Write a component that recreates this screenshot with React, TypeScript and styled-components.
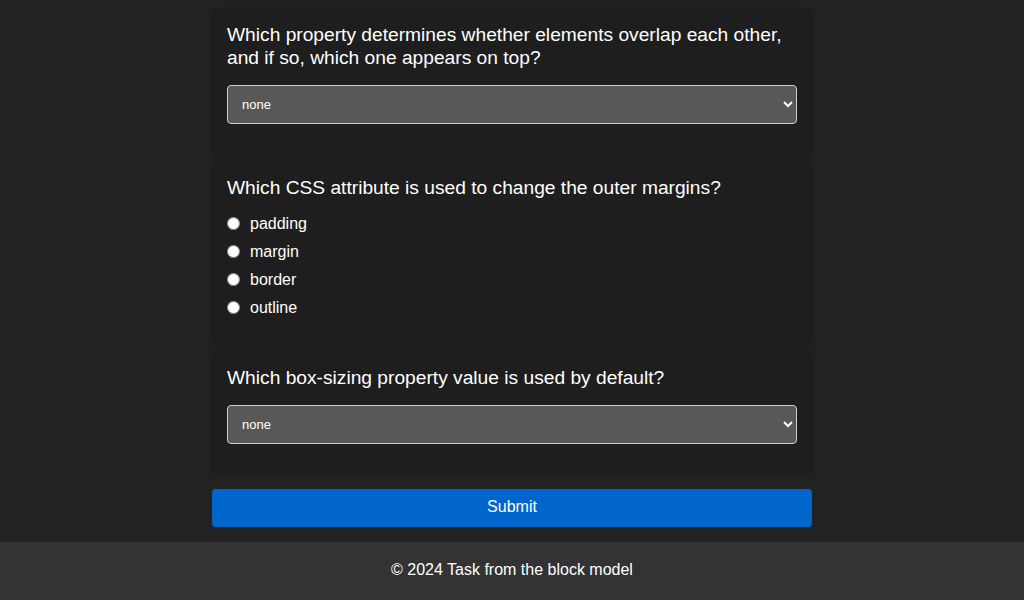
import React from "react";
import styled, { createGlobalStyle } from "styled-components";

const GlobalStyle = createGlobalStyle`
  html, body {
    margin: 0;
    padding: 0;
    background: #222222;
    color: #ffffff;
    font-family: "Liberation Sans", Arial, sans-serif;
  }
  * { box-sizing: border-box; }
`;

const Page = styled.div`
  min-height: 600px;
  display: flex;
  flex-direction: column;
  background: #222222;
`;

const Main = styled.main`
  width: 600px;
  margin: 0 auto;
  padding-top: 10px;
  display: flex;
  flex-direction: column;
  gap: 8px;
`;

const Card = styled.section`
  background: #1e1e1e;
  border-radius: 8px;
  padding: 13px 15px 15px;
  box-shadow: 0 0 6px rgba(0, 0, 0, 0.25);
`;

const Question = styled.h3<{ $gap: number }>`
  margin: 0 0 ${(p) => p.$gap}px 0;
  font-size: 19.2px;
  line-height: 23px;
  font-weight: 400;
  color: #ffffff;
`;

const Select = styled.select`
  display: block;
  width: 100%;
  height: 39px;
  margin: 0 0 16px 0;
  padding: 0 10px;
  background: #585858;
  color: #ffffff;
  border: 1px solid #d0d0d0;
  border-radius: 4px;
  font-family: "Liberation Sans", Arial, sans-serif;
  font-size: 13px;
  color-scheme: dark;
`;

const OptionList = styled.div`
  display: flex;
  flex-direction: column;
  margin-bottom: 8px;
`;

const OptionRow = styled.label`
  display: flex;
  align-items: center;
  gap: 10px;
  height: 28px;
  font-size: 16px;
  color: #ffffff;
`;

const Radio = styled.input`
  width: 13px;
  height: 13px;
  margin: 0;
  position: relative;
  top: -1px;
`;

const SubmitButton = styled.button`
  margin-top: 6px;
  height: 38px;
  width: 100%;
  padding: 0 0 2px 0;
  border: none;
  border-radius: 4px;
  background: #0066cc;
  color: #ffffff;
  font-family: "Liberation Sans", Arial, sans-serif;
  font-size: 16px;
`;

const Footer = styled.footer`
  margin-top: 15px;
  background: #333333;
  padding: 19px 0 21px;
  line-height: 18px;
  text-align: center;
  font-size: 16px;
  color: #ffffff;
`;

const radioOptions = ["padding", "margin", "border", "outline"];

export default function App() {
  return (
    <Page>
      <GlobalStyle />
      <Main>
        <Card>
          <Question $gap={16}>
            Which property determines whether elements overlap each other, and if so, which one appears on top?
          </Question>
          <Select defaultValue="none">
            <option value="none">none</option>
            <option value="z-index">z-index</option>
            <option value="position">position</option>
            <option value="display">display</option>
          </Select>
        </Card>
        <Card>
          <Question $gap={11}>Which CSS attribute is used to change the outer margins?</Question>
          <OptionList>
            {radioOptions.map((o) => (
              <OptionRow key={o}>
                <Radio type="radio" name="margins" value={o} />
                {o}
              </OptionRow>
            ))}
          </OptionList>
        </Card>
        <Card>
          <Question $gap={16}>Which box-sizing property value is used by default?</Question>
          <Select defaultValue="none">
            <option value="none">none</option>
            <option value="content-box">content-box</option>
            <option value="border-box">border-box</option>
          </Select>
        </Card>
        <SubmitButton type="button">Submit</SubmitButton>
      </Main>
      <Footer>© 2024 Task from the block model</Footer>
    </Page>
  );
}
